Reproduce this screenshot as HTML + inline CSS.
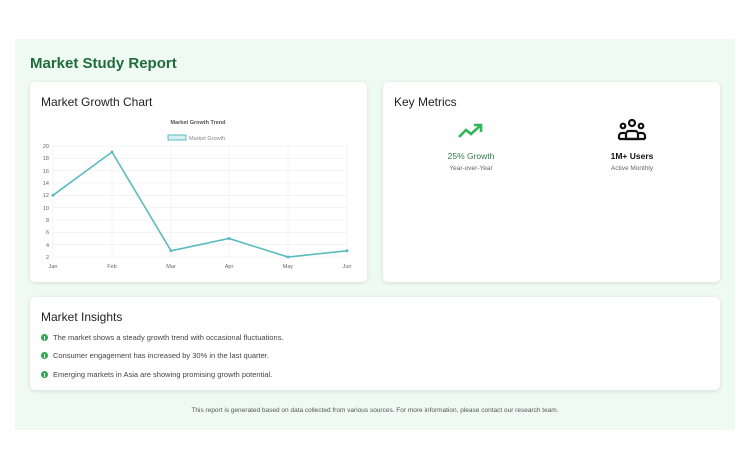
<!DOCTYPE html>
<html><head><meta charset="utf-8"><style>
*{margin:0;padding:0;box-sizing:border-box}
body{width:750px;height:469px;background:#fff;font-family:"Liberation Sans",sans-serif;position:relative;overflow:hidden}
.wrap{position:absolute;left:15px;top:39px;width:720px;height:391px;background:#effbf2}
h1{position:absolute;left:30px;top:55px;font-size:15px;color:#1f6b3b;font-weight:bold}
.card{position:absolute;background:#fff;border-radius:5px;box-shadow:0 1px 5px rgba(0,0,0,.12)}
.card h2{position:absolute;left:11px;top:13px;font-size:12px;font-weight:normal;color:#222}
.m{position:absolute;text-align:center;width:120px}
.m b{display:block;font-size:8.5px;font-weight:normal;margin-top:6px}
.m span{display:block;font-size:6.5px;color:#666;margin-top:4px}
.li{position:absolute;left:11px;font-size:7.5px;color:#444;display:flex;align-items:center}
.li i{width:7px;height:7px;border-radius:50%;background:#2fa84f;margin-right:5px;display:inline-block;position:relative}
.li i:after{content:"";position:absolute;left:3px;top:1.5px;width:1px;height:4px;background:#fff}
.foot{position:absolute;left:0;width:750px;top:407px;text-align:center;font-size:6.5px;color:#555}
</style></head><body>
<div class="wrap"></div>
<h1>Market Study Report</h1>
<div class="card" style="left:30px;top:82px;width:337px;height:200px">
<h2>Market Growth Chart</h2>
<svg style="position:absolute;left:0;top:0" width="337" height="200" font-family="Liberation Sans" font-size="5.5" fill="#666">
<text x="168" y="42" text-anchor="middle" font-weight="bold" fill="#555">Market Growth Trend</text>
<rect x="138" y="53" width="18" height="5" fill="#d9eef0" stroke="#5bbcbf"/>
<text x="159" y="58" fill="#888">Market Growth</text>
<g stroke="#ececec" stroke-width="0.6">
<line x1="23" y1="64" x2="317" y2="64"/><line x1="23" y1="76.3" x2="317" y2="76.3"/><line x1="23" y1="88.7" x2="317" y2="88.7"/><line x1="23" y1="101" x2="317" y2="101"/><line x1="23" y1="113.3" x2="317" y2="113.3"/><line x1="23" y1="125.7" x2="317" y2="125.7"/><line x1="23" y1="138" x2="317" y2="138"/><line x1="23" y1="150.3" x2="317" y2="150.3"/><line x1="23" y1="162.7" x2="317" y2="162.7"/><line x1="23" y1="175" x2="317" y2="175"/>
<line x1="23" y1="64" x2="23" y2="175"/><line x1="82" y1="64" x2="82" y2="175"/><line x1="141" y1="64" x2="141" y2="175"/><line x1="199" y1="64" x2="199" y2="175"/><line x1="258" y1="64" x2="258" y2="175"/><line x1="317" y1="64" x2="317" y2="175"/>
</g>
<g text-anchor="end"><text x="19" y="66">20</text><text x="19" y="78">18</text><text x="19" y="91">16</text><text x="19" y="103">14</text><text x="19" y="115">12</text><text x="19" y="128">10</text><text x="19" y="140">8</text><text x="19" y="152">6</text><text x="19" y="165">4</text><text x="19" y="177">2</text></g>
<g text-anchor="middle"><text x="23" y="186">Jan</text><text x="82" y="186">Feb</text><text x="141" y="186">Mar</text><text x="199" y="186">Apr</text><text x="258" y="186">May</text><text x="317" y="186">Jun</text></g>
<polyline points="23,113.3 82,70 141,168.8 199,156.5 258,175 317,168.8" fill="none" stroke="#5bbcbf" stroke-width="1.6"/>
<g fill="#5bbcbf"><circle cx="23" cy="113.3" r="1.5"/><circle cx="82" cy="70" r="1.5"/><circle cx="141" cy="168.8" r="1.5"/><circle cx="199" cy="156.5" r="1.5"/><circle cx="258" cy="175" r="1.5"/><circle cx="317" cy="168.8" r="1.5"/></g>
</svg>
</div>
<div class="card" style="left:383px;top:82px;width:337px;height:200px">
<h2>Key Metrics</h2>
<div class="m" style="left:28px;top:40px">
<svg width="28" height="18" viewBox="0 0 28 18"><polyline points="2,15 9,8 14,12 24,3" fill="none" stroke="#2fb656" stroke-width="2.6" stroke-linejoin="miter"/><polyline points="17,3 24,3 24,10" fill="none" stroke="#2fb656" stroke-width="2.6"/></svg>
<b style="color:#2e7d4b">25% Growth</b><span>Year-over-Year</span></div>
<div class="m" style="left:189px;top:36px">
<svg width="30" height="24" viewBox="0 0 30 24" fill="none" stroke="#111" stroke-width="2.2"><circle cx="15" cy="5" r="3"/><circle cx="6" cy="8" r="2.3"/><circle cx="24" cy="8" r="2.3"/><path d="M9 21v-5a3 3 0 0 1 3-3h6a3 3 0 0 1 3 3v5z"/><path d="M2 21v-3a3 3 0 0 1 3-3h3M28 21v-3a3 3 0 0 0-3-3h-3M2 21h26"/></svg>
<b style="color:#111;margin-top:4px;font-weight:bold">1M+ Users</b><span>Active Monthly</span></div>
</div>
<div class="card" style="left:30px;top:297px;width:690px;height:93px">
<h2>Market Insights</h2>
<div class="li" style="top:36px"><i></i>The market shows a steady growth trend with occasional fluctuations.</div>
<div class="li" style="top:54px"><i></i>Consumer engagement has increased by 30% in the last quarter.</div>
<div class="li" style="top:73px"><i></i>Emerging markets in Asia are showing promising growth potential.</div>
</div>
<div class="foot">This report is generated based on data collected from various sources. For more information, please contact our research team.</div>
</body></html>
